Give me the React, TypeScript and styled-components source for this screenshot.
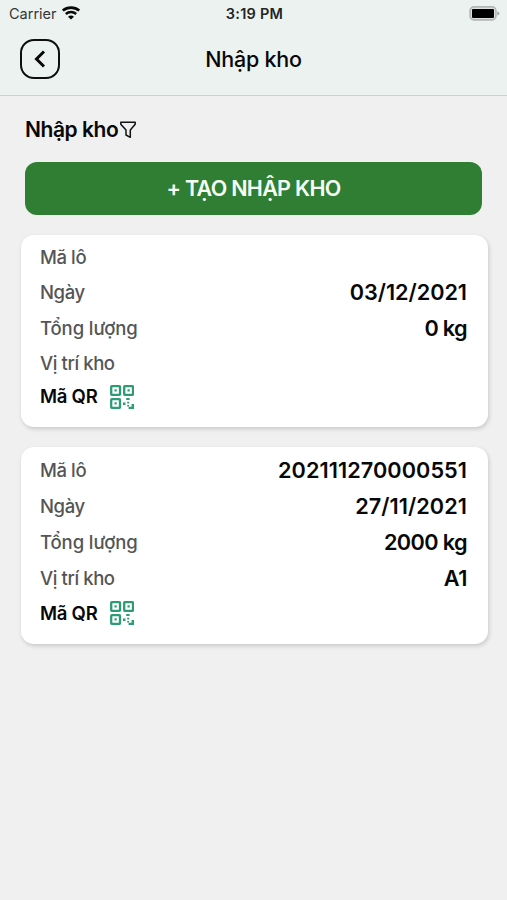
import React from "react";
import styled, { createGlobalStyle } from "styled-components";

const GlobalStyle = createGlobalStyle`
  * { box-sizing: border-box; }
  body {
    margin: 0;
    background: #f0f0f0;
    font-family: Inter, "Liberation Sans", sans-serif;
    color: #080808;
  }
`;

const Screen = styled.div`
  width: 100%;
  height: 900px;
  overflow: hidden;
  background: #f0f0f0;
`;

const Header = styled.header`
  height: 96px;
  background: #ebf2f0;
  border-bottom: 1px solid #cdd1d0;
`;

const StatusBar = styled.div`
  display: grid;
  grid-template-columns: 1fr auto 1fr;
  align-items: center;
  height: 27px;
  padding: 0 7px 0 9px;
`;

const Carrier = styled.div`
  display: flex;
  align-items: center;
  gap: 5px;
  color: #333636;
  svg { display: block; }
`;

const Label = styled.span<{ $size: number; $weight: number; $spacing?: number; $color?: string }>`
  font-size: ${(p) => p.$size}px;
  font-weight: ${(p) => p.$weight};
  letter-spacing: ${(p) => p.$spacing ?? 0}px;
  color: ${(p) => p.$color ?? "#080808"};
  line-height: 1.2;
  white-space: nowrap;
`;

const Battery = styled.div`
  justify-self: end;
  display: flex;
`;

const NavBar = styled.div`
  display: grid;
  grid-template-columns: 1fr auto 1fr;
  align-items: center;
  height: 65px;
  padding: 0 20px;
`;

const BackButton = styled.button`
  display: flex;
  align-items: center;
  justify-content: center;
  width: 40px;
  height: 40px;
  margin-bottom: 2px;
  padding: 0;
  border: 2px solid #0c0f0e;
  border-radius: 14px;
  background: transparent;
`;

const TitleRow = styled.div`
  display: flex;
  align-items: center;
  gap: 2px;
  height: 66px;
  padding: 2px 0 0 25px;
`;

const CreateButton = styled.button`
  display: flex;
  align-items: center;
  justify-content: center;
  width: 457px;
  height: 53px;
  margin: 0 0 0 25px;
  padding: 0;
  border: 0;
  border-radius: 12px;
  background: #2f7e33;
  font-family: inherit;
`;

const CardList = styled.main`
  display: flex;
  flex-direction: column;
  gap: 20px;
  padding: 20px 19px 0 21px;
`;

const Card = styled.section<{ $rows: string }>`
  display: grid;
  grid-template-rows: ${(p) => p.$rows};
  padding: 4px 21px 0 19px;
  border-radius: 13px;
  background: #fff;
  box-shadow: 1px 2px 4px rgba(0, 0, 0, 0.17);
`;

const Row = styled.div`
  display: flex;
  align-items: center;
  justify-content: space-between;
`;

const QrRow = styled.div`
  display: flex;
  align-items: center;
  gap: 12.5px;
`;

const Wifi = () => (
  <svg width="18" height="14" viewBox="0 0 18 14" fill="none" stroke="#080a0a">
    <path d="M.8 4.6C5.4.6 12.6.6 17.2 4.6" strokeWidth="2.7" />
    <path d="M3.8 8C6.8 5.4 11.2 5.4 14.2 8" strokeWidth="2.4" />
    <path d="M9 13.5 6 10.8Q9 8.4 12 10.8Z" fill="#080a0a" stroke="none" />
  </svg>
);

const BatteryIcon = () => (
  <svg width="31" height="15" viewBox="0 0 31 15">
    <rect x="1.1" y="0.9" width="25.8" height="13" rx="3.8" fill="#dde2e0" stroke="#b2b6b5" strokeWidth="1.6" />
    <rect x="3" y="3" width="22" height="9" rx="1" fill="#000" />
    <path d="M28.3 5.2Q30.4 6 30.4 7.4T28.3 9.6Z" fill="#a0a4a3" />
  </svg>
);

const Chevron = () => (
  <svg width="12" height="18" viewBox="0 0 12 18" fill="none" stroke="#080808" strokeWidth="3">
    <path d="M10 1.5 2.5 9 10 16.5" />
  </svg>
);

const Funnel = () => (
  <svg width="16" height="18" viewBox="0 0 16 18" fill="none" stroke="#111" strokeWidth="1.5" strokeLinejoin="round">
    <path d="M.8 1.2H15.2V3.3L10.3 9V16.3L6 14V9L.8 3.3Z" />
  </svg>
);

const QrIcon = () => (
  <svg width="24" height="24" viewBox="0 0 24 24" fill="none" stroke="#2c9c75" strokeWidth="2.3">
    <rect x="1.2" y="1.2" width="8.8" height="8.6" rx=".6" />
    <rect x="14.2" y="1.2" width="8.8" height="8.6" rx=".6" />
    <rect x="1.2" y="14.2" width="8.8" height="8.6" rx=".6" />
    <path
      d="M4.5 4.3h2.2v2.2H4.5zM17.5 4.3h2.2v2.2h-2.2zM4.5 17.3h2.2v2.2H4.5zM16.2 13.1h3.4v1.9h-3.4zM13 17.6h2.5v2.4H13zM17.2 16.8h2v1.6h-2zM17.2 20h1.8v1.6h-1.8zM21.6 19H24v5h-5.4v-2.2h3z"
      fill="#2c9c75"
      stroke="none"
    />
  </svg>
);

type Entry = { rows: string; fields: { label: string; value: string; spacing?: number }[] };

const entries: Entry[] = [
  {
    rows: "36px 35px 36px 34px 33px 14px",
    fields: [
      { label: "Mã lô", value: "" },
      { label: "Ngày", value: "03/12/2021", spacing: -0.05 },
      { label: "Tổng lượng", value: "0 kg", spacing: -0.65 },
      { label: "Vị trí kho", value: "" },
    ],
  },
  {
    rows: "37.5px 36px 36px 36px 33.5px 14px",
    fields: [
      { label: "Mã lô", value: "202111270000551" },
      { label: "Ngày", value: "27/11/2021" },
      { label: "Tổng lượng", value: "2000 kg", spacing: -0.6 },
      { label: "Vị trí kho", value: "A1", spacing: -0.4 },
    ],
  },
];

export default function App() {
  return (
    <Screen>
      <GlobalStyle />
      <Header>
        <StatusBar>
          <Carrier>
            <Label $size={14.5} $weight={400} $color="#333636">Carrier</Label>
            <Wifi />
          </Carrier>
          <Label $size={14.5} $weight={600} $spacing={0.25} $color="#222525">3:19 PM</Label>
          <Battery><BatteryIcon /></Battery>
        </StatusBar>
        <NavBar>
          <BackButton aria-label="Quay lại"><Chevron /></BackButton>
          <Label $size={21.5} $weight={500} $spacing={-0.25}>Nhập kho</Label>
        </NavBar>
      </Header>
      <TitleRow>
        <Label $size={21} $weight={600} $spacing={-0.45}>Nhập kho</Label>
        <Funnel />
      </TitleRow>
      <CreateButton>
        <Label $size={21.5} $weight={600} $spacing={-0.7} $color="#f6fff6">+ TẠO NHẬP KHO</Label>
      </CreateButton>
      <CardList>
        {entries.map((entry, i) => (
          <Card key={i} $rows={entry.rows}>
            {entry.fields.map((f) => (
              <Row key={f.label}>
                <Label $size={18.5} $weight={500} $spacing={f.label === "Tổng lượng" ? -0.1 : -0.4} $color="#555">{f.label}</Label>
                <Label $size={21.7} $weight={600} $spacing={f.spacing ?? 0.05}>{f.value}</Label>
              </Row>
            ))}
            <QrRow>
              <Label $size={18.5} $weight={600} $spacing={-0.25}>Mã QR</Label>
              <QrIcon />
            </QrRow>
          </Card>
        ))}
      </CardList>
    </Screen>
  );
}
